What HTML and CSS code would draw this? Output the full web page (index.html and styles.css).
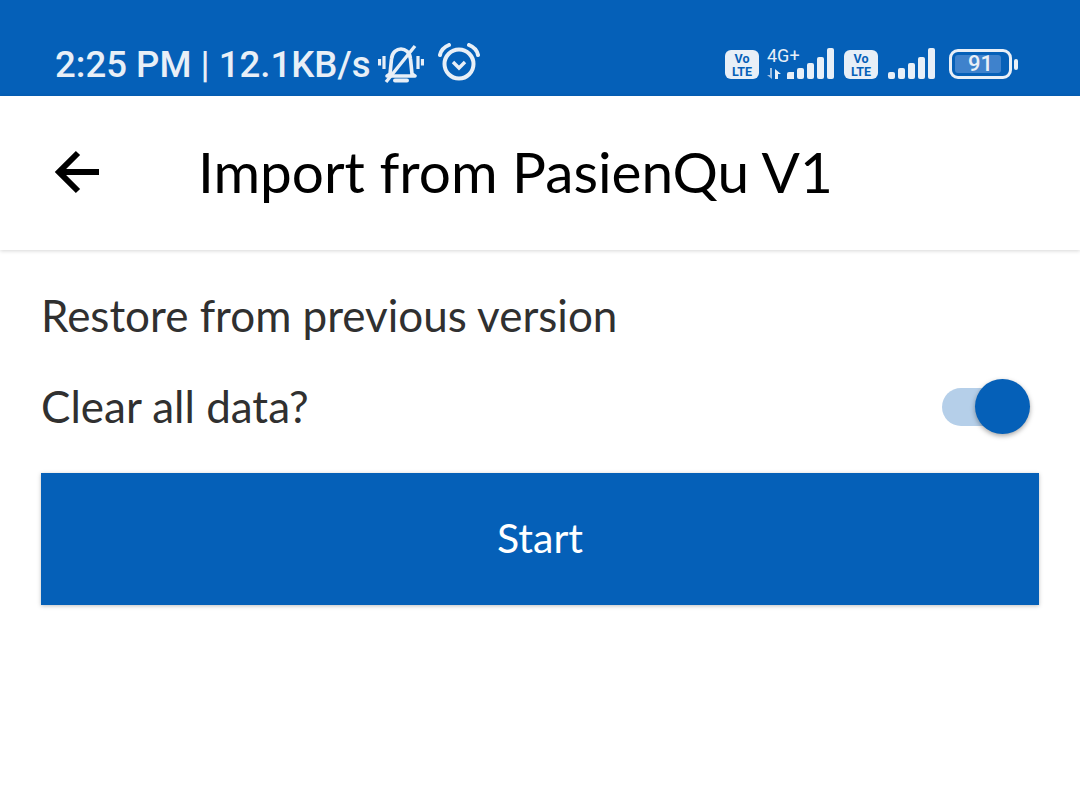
FILE: index.html
```html
<!DOCTYPE html>
<html lang="en">
<head>
<meta charset="utf-8">
<title>Import from PasienQu V1</title>
<link rel="stylesheet" href="styles.css">
</head>
<body>
<div class="status">
  <div class="status-left">
    <span class="time">2:25 PM | 12.1KB/s</span>
    <svg class="ic-bell" width="46" height="40" viewBox="0 0 46 40" fill="none" stroke="#e8eff7" stroke-width="3.600">
      <path d="M12 30 L13.500 15 C14 8 19 5 23 5 C27 5 32 8 32.500 15 L34 30 L37 32 H9 Z" stroke-linejoin="round"/>
      <path d="M17 36.500 H29" stroke-width="4" stroke-linecap="round"/>
      <path d="M8 38 L37 2" stroke-width="3.400"/>
      <path d="M6 12 V25 M1.500 15 V21.500 M40 12 V25 M44.500 15 V21.500" stroke-width="3.200"/>
    </svg>
    <svg class="ic-alarm" width="42" height="38" viewBox="0 0 42 38" fill="none" stroke="#e8eff7" stroke-width="4">
      <circle cx="21" cy="21" r="14.500"/>
      <path d="M15 19 L21 25 L27 19" stroke-width="3.400"/>
      <path d="M2 12 C3 7 6 4 11 2 M40 12 C39 7 36 4 31 2" stroke-linecap="round"/>
    </svg>
  </div>
  <div class="status-right">
    <span class="volte"><span>Vo</span><span>LTE</span></span>
    <div class="net">
      <span class="net-label">4G+</span>
      <svg class="ic-arrows" width="14" height="11" viewBox="0 0 14 11" fill="#9fc0e4">
        <path d="M3 0 H5 V11 L0 7 H3 Z"/>
        <path d="M8 1 L14 6 H11 V11 H8 Z" fill="#e8eff7"/>
      </svg>
    </div>
    <svg class="bars-a" width="47" height="31" viewBox="0 0 47 31" fill="#e8eff7">
      <path d="M0 31 V26 Q0 24 2 24 H7 V31 Z"/>
      <rect x="10" y="20" width="7" height="11" rx="2"/>
      <rect x="20" y="15" width="7" height="16" rx="2"/>
      <rect x="30" y="9" width="7" height="22" rx="2"/>
      <rect x="40" y="0" width="7" height="31" rx="2"/>
    </svg>
    <span class="volte volte-b"><span>Vo</span><span>LTE</span></span>
    <svg class="bars-b" width="47" height="31" viewBox="0 0 47 31" fill="#e8eff7">
      <rect x="0" y="24" width="7" height="7" rx="2"/>
      <rect x="10" y="20" width="7" height="11" rx="2"/>
      <rect x="20" y="15" width="7" height="16" rx="2"/>
      <rect x="30" y="9" width="7" height="22" rx="2"/>
      <rect x="40" y="0" width="7" height="31" rx="2"/>
    </svg>
    <div class="battery">
      <div class="batt-body"><span class="batt-fill"></span><span class="batt-num">91</span></div>
      <span class="batt-tip"></span>
    </div>
  </div>
</div>
<header class="appbar">
  <svg class="back" width="48" height="44" viewBox="0 0 48 44" fill="none" stroke="#000" stroke-width="6">
    <path d="M5 22 H46"/>
    <path d="M25 3 L6 22 L25 41"/>
  </svg>
  <h1 class="title">Import from PasienQu V1</h1>
</header>
<main class="content">
  <p class="label heading">Restore from previous version</p>
  <div class="row">
    <span class="label">Clear all data?</span>
    <div class="switch"><span class="track"></span><span class="thumb"></span></div>
  </div>
  <button class="start">Start</button>
</main>
</body>
</html>
```
FILE: styles.css
```css
* { box-sizing: border-box; }
html, body { margin: 0; padding: 0; }
body {
  width: 1080px;
  height: 785px;
  overflow: hidden;
  background: #fff;
  font-family: Lato, sans-serif;
}
.status {
  height: 96px;
  background: #0560b8;
  color: #e8eff7;
  display: flex;
  justify-content: space-between;
  align-items: center;
  padding: 32px 62px 0 55px;
}
.status-left { display: flex; align-items: center; }
.time {
  margin-top: 2px;
  font-family: Roboto, sans-serif;
  font-weight: 500;
  font-size: 36.600px;
  line-height: 42px;
  white-space: nowrap;
}
.ic-bell { margin-left: 7px; }
.ic-alarm { margin-left: 14px; margin-top: -4px; }
.status-right { display: flex; align-items: center; }
.volte {
  width: 34px;
  height: 29px;
  margin-left: 1px;
  padding-top: 1px;
  background: #e8eff7;
  border-radius: 6px;
  color: #0560b8;
  font-family: Roboto, sans-serif;
  font-weight: 700;
  font-size: 12.500px;
  line-height: 13px;
  display: flex;
  flex-direction: column;
  align-items: center;
  justify-content: center;
}
.net {
  width: 36px;
  height: 36px;
  margin-left: 8px;
  display: flex;
  flex-direction: column;
  align-self: flex-start;
}
.net-label {
  font-family: Roboto, sans-serif;
  font-size: 18px;
  line-height: 20px;
  white-space: nowrap;
}
.ic-arrows { margin-top: 2px; }
.bars-a { margin-left: -16px; margin-top: -2px; }
.volte-b { margin-left: 10px; }
.bars-b { margin-left: 10px; margin-top: -2px; }
.battery { display: flex; align-items: center; margin-left: 14px; }
.batt-body {
  position: relative;
  width: 63px;
  height: 30px;
  border: 3px solid #e8eff7;
  border-radius: 9px;
  display: flex;
  align-items: center;
  justify-content: center;
}
.batt-fill {
  position: absolute;
  left: 3px;
  top: 3px;
  bottom: 3px;
  width: 46px;
  background: #3f82cc;
  border-radius: 3px;
}
.batt-num {
  position: relative;
  font-family: Roboto, sans-serif;
  font-weight: 500;
  font-size: 22px;
  line-height: 24px;
}
.batt-tip {
  width: 4px;
  height: 11px;
  margin-left: 2px;
  background: #e8eff7;
  border-radius: 2px;
}
.appbar {
  height: 154px;
  background: #fff;
  display: flex;
  align-items: center;
  padding-left: 53px;
  box-shadow: 0 1px 4px rgba(0, 0, 0, 0.16);
}
.back { margin-top: -2px; flex: none; }
.title {
  margin: -4px 0 0 97px;
  font-weight: 400;
  font-size: 56.700px;
  line-height: 60px;
  color: #000;
  white-space: nowrap;
}
.content { padding: 40px 41px 0; }
.label {
  margin: 0;
  font-size: 44px;
  line-height: 50px;
  color: #303030;
}
.row {
  display: flex;
  justify-content: space-between;
  align-items: center;
  margin-top: 41px;
  height: 50px;
}
.switch { position: relative; width: 88px; height: 56px; margin: 1px 9px 0 0; }
.track {
  position: absolute;
  left: 0;
  top: 9px;
  width: 70px;
  height: 38px;
  border-radius: 19px;
  background: #b5cfe9;
}
.thumb {
  position: absolute;
  right: 0;
  top: 0;
  width: 55px;
  height: 55px;
  border-radius: 50%;
  background: #0560b8;
  box-shadow: 0 2px 5px rgba(0, 0, 0, 0.35);
}
.start {
  display: block;
  width: 998px;
  height: 132px;
  margin-top: 42px;
  padding: 0 0 3px;
  border: 0;
  background: #0560b8;
  color: #fff;
  font-family: Lato, sans-serif;
  font-size: 41px;
  box-shadow: 0 1px 4px rgba(0, 0, 0, 0.25);
}
```
